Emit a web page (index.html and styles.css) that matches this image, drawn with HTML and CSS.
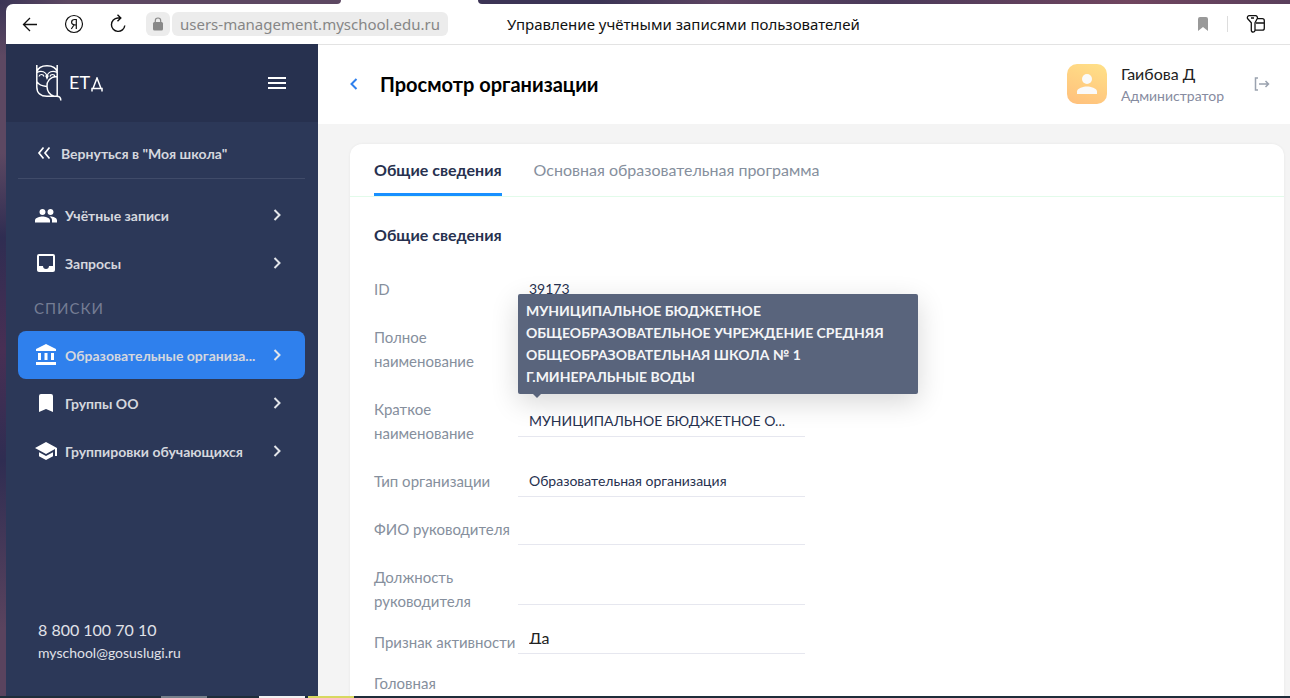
FILE: index.html
```html
<!DOCTYPE html>
<html lang="ru">
<head>
<meta charset="utf-8">
<meta name="viewport" content="width=device-width, initial-scale=1">
<title>Управление учётными записями пользователей</title>
<link rel="stylesheet" href="styles.css">
</head>
<body>
<div class="desktop">
  <div class="tabstrip"><span class="tabstrip-left"></span><span class="tabstrip-active"></span><span class="tabstrip-right"></span></div>
  <div class="window">
    <header class="browser">
      <div class="browser-nav">
        <button class="browser-btn" aria-label="Назад"><svg width="20" height="20" viewBox="0 0 20 20" fill="none" stroke="#111" stroke-width="1.300"><path d="M17 10.500H3.500M10 4 3.500 10.500 10 17"/></svg></button>
        <button class="browser-btn" aria-label="Яндекс"><svg width="20" height="20" viewBox="0 0 20 20" fill="none" stroke="#111" stroke-width="1.200"><circle cx="10" cy="10" r="8.500"/><path d="M12.300 15V5.500h-1.500c-2.200 0-3.200 1.200-3.200 2.800 0 1.700 1.200 2.700 4.500 2.700M10 11 7.300 15"/></svg></button>
        <button class="browser-btn" aria-label="Обновить"><svg width="20" height="20" viewBox="0 0 20 20" fill="none" stroke="#111" stroke-width="1.400"><path d="M12 4H9.800a6.700 6.700 0 1 0 7 7.500M9.500.8 12.800 4 9.500 7.300"/></svg></button>
      </div>
      <div class="address">
        <span class="address-lock"><svg width="12" height="14" viewBox="0 0 12 14"><rect x="1" y="5" width="10" height="8.500" rx="1.500" fill="#888"/><path d="M3.300 6V3.700a2.700 2.700 0 0 1 5.400 0V6" fill="none" stroke="#888" stroke-width="1.200"/></svg></span>
        <span class="address-url">users-management.myschool.edu.ru</span>
      </div>
      <span class="browser-title">Управление учётными записями пользователей</span>
      <div class="browser-tools">
        <button class="browser-btn" aria-label="В закладки"><svg width="12" height="16" viewBox="0 0 12 16"><path d="M1 3a2 2 0 0 1 2-2h6a2 2 0 0 1 2 2v12l-5-4-5 4z" fill="#999"/></svg></button>
        <span class="browser-sep"></span>
        <button class="browser-btn" aria-label="Пароли"><svg width="20" height="20" viewBox="0 0 20 20" fill="none" stroke="#111" stroke-width="1.300" stroke-linejoin="round"><path d="M3 1.700h6.500a2 2 0 0 1 1.800 2.800L9 8.800v7.500c0 2.400-3.700 2.400-3.700 0V8.800L1.500 4.500A2 2 0 0 1 3 1.700zM5 4h3M11.500 4.700h4.800a2 2 0 0 1 2 2v7.500a2 2 0 0 1-2 2H9.200M10 9h8.300"/></svg></button>
      </div>
    </header>

    <div class="app">
      <aside class="sidebar">
        <div class="sidebar-head">
          <a class="brand" href="#">
            <svg width="28" height="38" viewBox="0 0 28 38" fill="none" stroke="#fff" stroke-width="1.500"><path d="M2.800 1v22c0 6 4 9.300 10 9.300h10c2.500 0 4 1 4 4.200M23.200 1v31M2.800 8C5-.2 21-.2 23.200 8M22.800 12.500c-7 .5-10 5-9.800 10 .2 5 3 8.500 7 9.800M2.800 17.500c2 3.500 5.500 4.600 10 5"/><path stroke-width="1.200" d="M3 8.500c4-2.500 9.500-1 10 4.500.5-5.500 6-7 10-4.500M5 12.500c.5-2.700 4.300-2.700 5 0M16 12.500c.6-2.700 4.400-2.700 5 0M11.700 11.500l1.300 3 1.300-3"/></svg>
            <span class="brand-name">ЕТ<svg class="brand-delta" width="12" height="15" viewBox="0 0 12 15" fill="none" stroke="#fff" stroke-width="1.500"><path d="M1 14.500v-3h10v3M2 11.500 6 1l4 10.500"/></svg></span>
          </a>
          <button class="burger" aria-label="Меню"><svg width="18" height="12" viewBox="0 0 18 12" fill="#fff"><path d="M0 0h18v2H0zM0 5h18v2H0zM0 10h18v2H0z"/></svg></button>
        </div>
        <a class="back-link" href="#"><svg width="14" height="14" viewBox="0 0 14 14" fill="none" stroke="#fff" stroke-width="1.700"><path d="M6.500 1.500 2 7l4.500 5.500M12.500 1.500 8 7l4.500 5.500"/></svg>Вернуться в "Моя школа"</a>
        <nav class="menu">
          <a class="menu-item" href="#"><svg class="menu-icon" viewBox="0 0 24 24"><path d="M16.500 12c1.700 0 3-1.300 3-3s-1.300-3-3-3-3 1.300-3 3 1.300 3 3 3zm-8 0c1.700 0 3-1.300 3-3s-1.300-3-3-3-3 1.300-3 3 1.300 3 3 3zm0 1.500C6 13.500 1 14.700 1 17.300V19.500h15v-2.200c0-2.600-5-3.800-7.500-3.800zm8 0-1 .1c1.300.8 2.500 2 2.500 3.700v2.200h5v-2.200c0-2.600-4-3.800-6.500-3.800z"/></svg><span class="menu-text">Учётные записи</span><svg class="chevron" viewBox="0 0 8 12"><path d="m1.500 1 5 5-5 5"/></svg></a>
          <a class="menu-item" href="#"><svg class="menu-icon" viewBox="0 0 24 24"><path d="M19 3H5a2 2 0 0 0-2 2v14c0 1.100.9 2 2 2h14a2 2 0 0 0 2-2V5a2 2 0 0 0-2-2zm0 12h-4c0 1.700-1.300 3-3 3s-3-1.300-3-3H5V5h14z"/></svg><span class="menu-text">Запросы</span><svg class="chevron" viewBox="0 0 8 12"><path d="m1.500 1 5 5-5 5"/></svg></a>
          <span class="menu-title">СПИСКИ</span>
          <a class="menu-item menu-item-active" href="#"><svg class="menu-icon" viewBox="0 0 24 24"><path d="M4 10v7h3v-7zm6.500 0v7h3v-7zM2 22h20v-3H2zm15-12v7h3v-7zM12 1 2 6v2h20V6z"/></svg><span class="menu-text">Образовательные организа...</span><svg class="chevron" viewBox="0 0 8 12"><path d="m1.500 1 5 5-5 5"/></svg></a>
          <a class="menu-item" href="#"><svg class="menu-icon" viewBox="0 0 24 24"><path d="M17 3H7a2 2 0 0 0-2 2v16l7-3 7 3V5a2 2 0 0 0-2-2z"/></svg><span class="menu-text">Группы ОО</span><svg class="chevron" viewBox="0 0 8 12"><path d="m1.500 1 5 5-5 5"/></svg></a>
          <a class="menu-item" href="#"><svg class="menu-icon" viewBox="0 0 24 24"><path d="M5 13.200v4L12 21l7-3.800v-4L12 17zM12 3 1 9l11 6 9-4.900V17h2V9z"/></svg><span class="menu-text">Группировки обучающихся</span><svg class="chevron" viewBox="0 0 8 12"><path d="m1.500 1 5 5-5 5"/></svg></a>
        </nav>
        <div class="contacts">
          <a class="phone" href="tel:88001007010">8 800 100 70 10</a>
          <a class="mail" href="mailto:myschool@gosuslugi.ru">myschool@gosuslugi.ru</a>
        </div>
      </aside>

      <main class="main">
        <header class="page-head">
          <button class="page-back" aria-label="Назад"><svg width="8" height="12" viewBox="0 0 8 12" fill="none" stroke="#2f80ed" stroke-width="2"><path d="M6.500 1 1.500 6l5 5"/></svg></button>
          <h1 class="page-title">Просмотр организации</h1>
          <div class="user">
            <span class="avatar"><svg width="40" height="40" viewBox="0 0 40 40" fill="#fafafa"><circle cx="20" cy="15" r="5"/><path d="M10 30v-2.500c0-3.300 6.700-5 10-5s10 1.700 10 5V30z"/></svg></span>
            <span class="user-info"><span class="user-name">Гаибова Д</span><span class="user-role">Администратор</span></span>
            <button class="logout" aria-label="Выйти"><svg width="16" height="14" viewBox="0 0 16 14" fill="none" stroke="#9aa2af" stroke-width="1.500"><path d="M4 1H1.500v12H4M5 7h9.500M11.500 4l3 3-3 3"/></svg></button>
          </div>
        </header>
        <section class="card">
          <div class="tabs" role="tablist">
            <button class="tab tab-active" role="tab" aria-selected="true">Общие сведения</button>
            <button class="tab" role="tab" aria-selected="false">Основная образовательная программа</button>
          </div>
          <form class="form">
            <h2 class="form-title">Общие сведения</h2>
            <div class="row"><label class="label" for="org-id">ID</label><div class="control"><input class="input" id="org-id" value="39173" readonly></div></div>
            <div class="row"><label class="label" for="full">Полное наименование</label><div class="control"><input class="input" id="full" readonly></div></div>
            <div class="row"><label class="label" for="short">Краткое наименование</label><div class="control"><input class="input" id="short" value="МУНИЦИПАЛЬНОЕ БЮДЖЕТНОЕ О..." readonly>
              <div class="tooltip" role="tooltip">МУНИЦИПАЛЬНОЕ БЮДЖЕТНОЕ ОБЩЕОБРАЗОВАТЕЛЬНОЕ УЧРЕЖДЕНИЕ СРЕДНЯЯ ОБЩЕОБРАЗОВАТЕЛЬНАЯ ШКОЛА № 1 Г.МИНЕРАЛЬНЫЕ ВОДЫ</div></div></div>
            <div class="row"><label class="label" for="type">Тип организации</label><div class="control"><input class="input" id="type" value="Образовательная организация" readonly></div></div>
            <div class="row"><label class="label" for="head">ФИО руководителя</label><div class="control"><input class="input" id="head" readonly></div></div>
            <div class="row"><label class="label" for="post">Должность руководителя</label><div class="control"><input class="input" id="post" readonly></div></div>
            <div class="row row-compact"><label class="label" for="active">Признак активности</label><div class="control"><input class="input" id="active" value="Да" readonly></div></div>
            <div class="row"><span class="label">Головная</span></div>
          </form>
        </section>
      </main>
    </div>
  </div>
  <footer class="taskbar"><span class="task task-grey"></span><span class="task task-white"></span><span class="task task-yellow"></span></footer>
</div>
</body>
</html>
```
FILE: styles.css
```css
* { box-sizing: border-box; }
body { margin: 0; font-family: Lato, "Liberation Sans", sans-serif; font-size: 14px; color: #222; }
button { padding: 0; border: 0; background: none; font: inherit; color: inherit; }
a { color: inherit; text-decoration: none; }
svg { display: block; flex: none; }
h1, h2 { margin: 0; }

.desktop {
  height: 100vh; overflow: hidden; display: flex; flex-direction: column;
  background: linear-gradient(180deg, #3b3556 0, #5d4862 8%, #5d4862 22%, #2f2d52 34%, #482f54 50%, #2f2d52 66%, #5a435e 90%);
}
.tabstrip { height: 4px; flex: none; display: flex; background: #fff; }
.tabstrip-left { width: 341px; border-bottom-right-radius: 4px; background: linear-gradient(90deg, #3b3556, #5d4862 20%, #5d4862); }
.tabstrip-active { width: 137px; }
.tabstrip-right { flex: 1; border-bottom-left-radius: 4px; background: linear-gradient(90deg, #3c3455, #3c3455 15%, #5d4462 30%, #4a3a5a 50%, #70455f 80%, #5a3f5c); }
.window { flex: 1; min-height: 0; margin-left: 6px; display: flex; flex-direction: column; background: #fff; border-top-left-radius: 7px; overflow: hidden; }

.browser { height: 41px; flex: none; display: flex; align-items: center; padding: 0 24px 0 14px; border-bottom: 1px solid #e3e3e3; font-family: "Noto Sans", sans-serif; font-size: 15px; }
.browser-nav { display: flex; gap: 24px; }
.address { display: flex; gap: 2px; margin-left: 18px; }
.address-lock, .address-url { height: 24px; border-radius: 6px; background: #ececec; display: flex; align-items: center; }
.address-lock { width: 24px; justify-content: center; }
.address-url { padding: 0 8px; color: #868686; }
.browser-title { margin-left: 59px; color: #111; }
.browser-tools { margin-left: auto; display: flex; align-items: center; gap: 18px; }
.browser-sep { width: 1px; height: 16px; background: #ddd; }

.app { flex: 1; min-height: 0; display: flex; }
.sidebar { width: 312px; flex: none; display: flex; flex-direction: column; background: #2c3858; color: #d5d7de; margin-top: -1px; }
.sidebar-head { height: 78px; flex: none; display: flex; align-items: center; justify-content: space-between; padding: 0 32px 0 28px; background: #27314f; }
.brand { display: flex; align-items: center; gap: 7px; color: #fff; }
.brand-name { display: flex; align-items: center; gap: 1px; padding-bottom: 2px; font-size: 18px; line-height: 20px; }
.brand-delta { margin-top: 4px; }
.back-link { display: flex; align-items: center; gap: 10px; height: 57px; padding: 6px 19px 0; margin: 0 13px 0 12px; border-bottom: 1px solid #404b69; font-weight: 700; }
.menu { display: flex; flex-direction: column; padding: 12px 13px 0 12px; }
.menu-item { display: flex; align-items: center; height: 48px; padding: 0 24px 0 16px; border-radius: 8px; font-weight: 700; }
.menu-item-active { background: #2f80ed; }
.menu-icon { width: 24px; height: 24px; fill: #fff; margin-right: 7px; }
.menu-text { flex: 1; white-space: nowrap; }
.chevron { width: 8px; height: 12px; fill: none; stroke: #e3e5ea; stroke-width: 2; }
.menu-title { height: 44px; line-height: 42px; padding-left: 16px; color: #757d94; font-size: 15px; letter-spacing: 1px; }
.contacts { margin-top: auto; padding: 0 32px 32px; display: flex; flex-direction: column; color: #e0e2e8; }
.phone { font-size: 16px; line-height: 24px; }
.mail { line-height: 22px; }

.main { flex: 1; min-width: 0; background: #f4f4f4; display: flex; flex-direction: column; overflow: hidden; }
.page-head { height: 79px; flex: none; display: flex; align-items: center; padding: 0 20px 2px 32px; background: #fff; }
.page-title { margin-left: 22px; font-size: 20px; line-height: 24px; color: #000; }
.user { margin-left: auto; display: flex; align-items: center; }
.avatar { border-radius: 10px; overflow: hidden; background: linear-gradient(20deg, #ffbf7c, #ffe188); }
.user-info { display: flex; flex-direction: column; margin: 2px 30px 0 14px; }
.user-name { font-size: 16px; line-height: 22px; }
.user-role { line-height: 22px; color: #868ba0; }

.card { margin: 20px 6px 0 32px; flex: 1 0 auto; background: #fff; border-radius: 12px 12px 0 0; box-shadow: 0 0 3px rgba(0, 0, 0, .06); }
.tabs { display: flex; gap: 32px; height: 53px; padding: 0 24px; border-bottom: 1px solid #e2fbea; }
.tab { height: 52px; padding-top: 1px; border-bottom: 3px solid transparent; font-size: 16px; color: #868f9d; }
.tab-active { border-color: #1890ff; color: #27314f; font-weight: 700; }
.form { padding: 26px 24px 0; }
.form-title { margin-bottom: 18px; font-size: 16px; line-height: 24px; color: #27314f; }
.row { display: grid; grid-template-columns: 144px 287px; align-items: center; padding: 12px 0; }
.label { font-size: 15px; line-height: 24px; color: #868f9d; }
.control { position: relative; height: 32px; margin: -4px 0; border-bottom: 1px solid #e6e7ef; }
.input { display: block; width: 100%; height: 30px; padding: 0 11px; border: 0; outline: 0; background: none; font: inherit; color: #27314f; }
.row-compact { height: 34px; padding: 0; white-space: nowrap; }
.row-compact .control { height: 24px; margin: 0; }
.row-compact .input { height: 14px; font-size: 16px; color: #222; }

.tooltip { position: absolute; z-index: 1; left: 0; bottom: calc(100% + 11px); width: 400px; padding: 6px 8px; border-radius: 2px; background: #59647c; color: #f4f5f7; font-weight: 700; line-height: 22px; box-shadow: 0 8px 28px rgba(0, 0, 0, .16); }
.tooltip::after { content: ""; position: absolute; left: 15px; top: 100%; border: 4px solid transparent; border-top-color: #59647c; }

.taskbar { height: 2px; flex: none; display: flex; padding-left: 161px; background: #1f2d3a; }
.task { width: 46px; }
.task-grey { background: #77808a; margin-right: 52px; }
.task-white { background: #f1f1f1; margin-right: 3px; }
.task-yellow { background: #d8d860; }
```
